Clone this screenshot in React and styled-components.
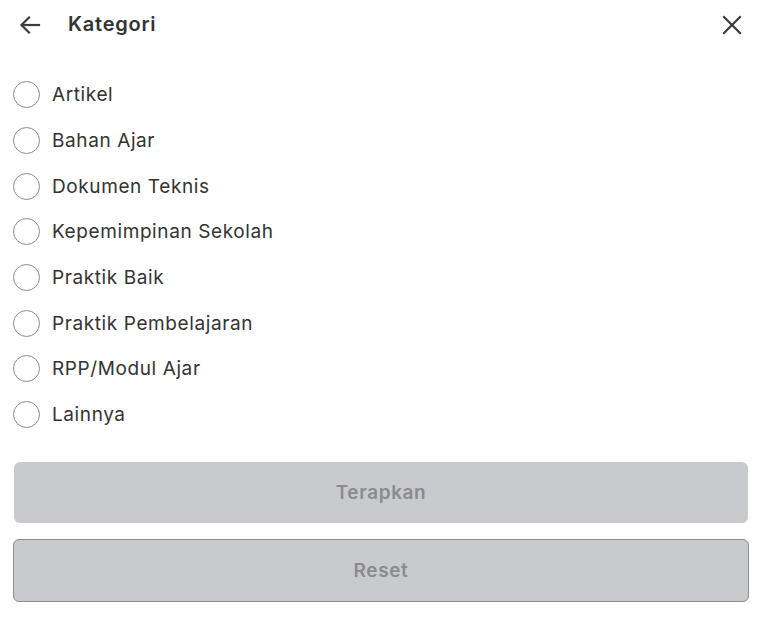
import React, { useState } from "react"
import styled, { createGlobalStyle } from "styled-components"

const GlobalStyle = createGlobalStyle`
  body {
    margin: 0;
    background: #fff;
    font-family: Inter, "Noto Sans", sans-serif;
    color: #333;
  }
`

const categories = [
  "Artikel",
  "Bahan Ajar",
  "Dokumen Teknis",
  "Kepemimpinan Sekolah",
  "Praktik Baik",
  "Praktik Pembelajaran",
  "RPP/Modul Ajar",
  "Lainnya",
]

const App = () => {
  const [selected, setSelected] = useState(null)

  return (
    <>
      <GlobalStyle />
      <Sheet>
        <Header>
          <HeaderLeft>
            <IconButton aria-label="Kembali">
              <svg width="24" height="24" viewBox="0 0 24 24" fill="none" stroke="#3a3b3e" strokeWidth="2.2" strokeLinecap="square">
                <path d="M21 12H4" />
                <path d="M11 4.5 3.5 12 11 19.5" />
              </svg>
            </IconButton>
            <Title>Kategori</Title>
          </HeaderLeft>
          <IconButton aria-label="Tutup">
            <svg width="22" height="22" viewBox="0 0 22 22" fill="none" stroke="#3a3b3e" strokeWidth="2.2" strokeLinecap="square">
              <path d="M3 3l16 16M19 3 3 19" />
            </svg>
          </IconButton>
        </Header>

        <List>
          {categories.map((c) => (
            <Option key={c} onClick={() => setSelected(c)}>
              <Radio checked={selected === c} />
              <Label>{c}</Label>
            </Option>
          ))}
        </List>

        <Actions>
          <ActionButton disabled>Terapkan</ActionButton>
          <ActionButton disabled outlined>Reset</ActionButton>
        </Actions>
      </Sheet>
    </>
  )
}

export default App

const Sheet = styled.div`
  display: flex;
  flex-direction: column;
  padding: 0 15px 0 14px;
`

const Header = styled.div`
  display: flex;
  align-items: center;
  justify-content: space-between;
  height: 50px;
  padding: 0 5px 0 4px;
`

const HeaderLeft = styled.div`
  display: flex;
  align-items: center;
  gap: 26px;
`

const IconButton = styled.button`
  display: flex;
  align-items: center;
  justify-content: center;
  padding: 0;
  border: none;
  background: none;
  cursor: pointer;
`

const Title = styled.h1`
  margin: 0 0 2px;
  font-size: 20px;
  font-weight: 600;
  letter-spacing: 0.75px;
  color: #333;
`

const List = styled.div`
  display: flex;
  flex-direction: column;
  padding-top: 22px;
`

const Option = styled.label`
  display: flex;
  align-items: center;
  gap: 12px;
  height: 45.7px;
  cursor: pointer;
`

const Radio = styled.span`
  box-sizing: border-box;
  width: 27px;
  height: 27px;
  margin-left: -1px;
  border-radius: 50%;
  border: 1px solid ${(p) => (p.checked ? "#3b6fd4" : "#8a8b8e")};
  box-shadow: ${(p) => (p.checked ? "inset 0 0 0 6px #3b6fd4" : "none")};
`

const Label = styled.span`
  font-size: 19px;
  letter-spacing: 0.6px;
  color: #333;
`

const Actions = styled.div`
  display: flex;
  flex-direction: column;
  gap: 16px;
  padding-top: 24px;
`

const ActionButton = styled.button`
  height: ${(p) => (p.outlined ? "63px" : "61px")};
  margin: ${(p) => (p.outlined ? "0 -1px" : "0")};
  border-radius: 6px;
  border: ${(p) => (p.outlined ? "1px solid #8d8e92" : "none")};
  background: #c9cacd;
  color: #8a8b8f;
  font-family: Inter, "Noto Sans", sans-serif;
  font-size: 19px;
  font-weight: 600;
  letter-spacing: 0.6px;
`
